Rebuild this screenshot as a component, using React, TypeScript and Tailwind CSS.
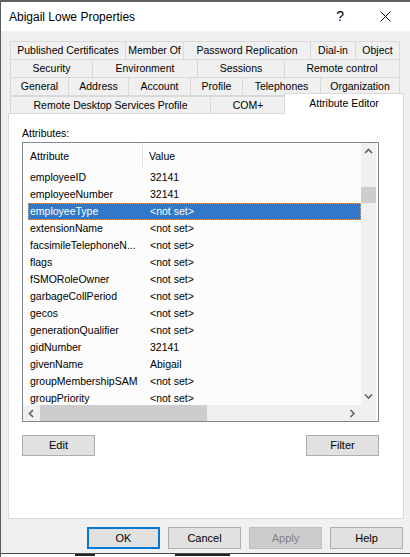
import React from 'react';

const font = { fontFamily: '"Liberation Sans", Arial, sans-serif' };

type Tab = { label: string; w: string };

const rows: Tab[][] = [
  [
    { label: 'Published Certificates', w: 'w-[116px]' },
    { label: 'Member Of', w: 'w-[59px]' },
    { label: 'Password Replication', w: 'w-[128px]' },
    { label: 'Dial-in', w: 'w-[46px]' },
    { label: 'Object', w: 'w-[45px]' },
  ],
  [
    { label: 'Security', w: 'w-[83px]' },
    { label: 'Environment', w: 'w-[106px]' },
    { label: 'Sessions', w: 'w-[88px]' },
    { label: 'Remote control', w: 'w-[116px]' },
  ],
  [
    { label: 'General', w: 'w-[59px]' },
    { label: 'Address', w: 'w-[61px]' },
    { label: 'Account', w: 'w-[63px]' },
    { label: 'Profile', w: 'w-[53px]' },
    { label: 'Telephones', w: 'w-[79px]' },
    { label: 'Organization', w: 'w-[80px]' },
  ],
];

const attributes: [string, string][] = [
  ['employeeID', '32141'],
  ['employeeNumber', '32141'],
  ['employeeType', '<not set>'],
  ['extensionName', '<not set>'],
  ['facsimileTelephoneN...', '<not set>'],
  ['flags', '<not set>'],
  ['fSMORoleOwner', '<not set>'],
  ['garbageCollPeriod', '<not set>'],
  ['gecos', '<not set>'],
  ['generationQualifier', '<not set>'],
  ['gidNumber', '32141'],
  ['givenName', 'Abigail'],
  ['groupMembershipSAM', '<not set>'],
  ['groupPriority', '<not set>'],
];

const Chevron: React.FC<{ dir: 'up' | 'down' | 'left' | 'right' }> = ({ dir }) => {
  const d = {
    up: 'M1 5 L4.5 1.5 L8 5',
    down: 'M1 1.5 L4.5 5 L8 1.5',
    left: 'M5 1 L1.5 4.5 L5 8',
    right: 'M1.5 1 L5 4.5 L1.5 8',
  }[dir];
  const vertical = dir === 'up' || dir === 'down';
  return (
    <svg width={vertical ? 9 : 7} height={vertical ? 7 : 9} viewBox={vertical ? '0 0 9 7' : '0 0 7 9'}>
      <path d={d} fill="none" stroke="#606060" strokeWidth="1.6" />
    </svg>
  );
};

const Button: React.FC<{ label: string; kind?: 'default' | 'disabled'; h?: string }> = ({
  label,
  kind,
  h = 'h-[22px]',
}) => {
  let cls = 'bg-[#e1e1e1] border border-[#adadad] text-black';
  if (kind === 'default') cls = 'bg-[#e1e1e1] border-2 border-[#0078d7] text-black';
  if (kind === 'disabled') cls = 'bg-[#cccccc] border border-[#bfbfbf] text-[#838383]';
  return (
    <div className={`w-[73px] ${h} flex items-center justify-center text-[11px] ${cls}`}>{label}</div>
  );
};

export default function App() {
  return (
    <div className="w-[410px] h-[557px] overflow-hidden bg-white flex flex-col" style={font}>
      <div className="h-[2px] bg-[#5f5f68] shrink-0" />
      <div className="flex-1 flex flex-col border-l border-[#5b5b5b]">
        {/* title bar */}
        <div className="h-[29px] bg-white flex items-center shrink-0">
          <span className="ml-[8px] text-[12px] text-black">Abigail Lowe Properties</span>
          <span className="ml-auto mr-[36px] text-[14px] text-black">?</span>
          <svg className="mr-[19px]" width="11" height="11" viewBox="0 0 11 11">
            <path d="M0.5 0.5 L10.5 10.5 M10.5 0.5 L0.5 10.5" stroke="#000" strokeWidth="1" />
          </svg>
        </div>

        {/* dialog body */}
        <div className="flex-1 bg-[#f0f0f0] flex flex-col text-[10.5px] text-black">
          <div className="pt-[10px] pl-[9px] flex flex-col">
            {rows.map((row, ri) => (
              <div key={ri} className={`flex ${ri > 0 ? '-mt-px' : ''}`}>
                {row.map((t, ti) => (
                  <div
                    key={t.label}
                    className={`${t.w} h-[19px] ${ti > 0 ? '-ml-px' : ''} border border-[#d9d9d9] bg-[#f0f0f0] flex items-center justify-center whitespace-nowrap`}
                  >
                    {t.label}
                  </div>
                ))}
              </div>
            ))}
            <div className="flex items-end -mt-[3px] relative z-10 -mb-px">
              <div className="w-[201px] h-[18px] border border-[#d9d9d9] border-b-0 flex items-center justify-center">
                Remote Desktop Services Profile
              </div>
              <div className="w-[76px] h-[18px] -ml-px border border-[#d9d9d9] border-b-0 flex items-center justify-center">
                COM+
              </div>
              <div className="w-[120px] h-[21px] -ml-[2px] border border-[#d9d9d9] border-b-0 bg-white flex items-start justify-center pt-[2px]">
                Attribute Editor
              </div>
            </div>
          </div>

          {/* panel */}
          <div className="ml-[7px] w-[396px] h-[406px] bg-white border border-[#d9d9d9] pl-[13px] pt-[12px] flex flex-col">
            <div className="h-[14px] leading-[14px]">Attributes:</div>
            <div className="mt-[2px] w-[357px] h-[280px] border border-[#828790] bg-[#fbfcfb] flex flex-col">
              <div className="flex h-[262px]">
                <div className="w-[338px] flex flex-col overflow-hidden">
                  <div className="h-[26px] flex shrink-0">
                    <div className="w-[120px] pl-[7px] pt-[2px] flex items-center border-r border-[#e5e5e5]">Attribute</div>
                    <div className="pl-[6px] pt-[2px] flex items-center">Value</div>
                  </div>
                  {attributes.map(([name, value]) => {
                    const sel = name === 'employeeType';
                    return (
                      <div
                        key={name}
                        className={`ml-[5px] w-[333px] h-[17px] shrink-0 flex items-center ${
                          sel
                            ? 'bg-[#3178c8] text-white border border-dotted border-[#e9a46c]'
                            : 'border border-transparent'
                        }`}
                      >
                        <span className="w-[121px] pl-[1px] whitespace-nowrap">{name}</span>
                        <span className="whitespace-nowrap">{value}</span>
                      </div>
                    );
                  })}
                </div>
                {/* vertical scrollbar */}
                <div className="w-[15px] bg-[#f0f0f0] flex flex-col">
                  <div className="h-[17px] flex items-center justify-center">
                    <Chevron dir="up" />
                  </div>
                  <div className="flex-1 flex flex-col">
                    <div className="h-[27px]" />
                    <div className="h-[16px] bg-[#cdcdcd]" />
                  </div>
                  <div className="h-[17px] flex items-center justify-center">
                    <Chevron dir="down" />
                  </div>
                </div>
              </div>
              {/* horizontal scrollbar */}
              <div className="flex h-[16px]">
                <div className="w-[338px] bg-[#f0f0f0] flex items-center">
                  <div className="w-[17px] flex items-center justify-center">
                    <Chevron dir="left" />
                  </div>
                  <div className="w-[167px] h-full bg-[#cdcdcd]" />
                  <div className="ml-auto w-[17px] flex items-center justify-center">
                    <Chevron dir="right" />
                  </div>
                </div>
                <div className="w-[15px] bg-[#f0f0f0]" />
              </div>
            </div>

            <div className="mt-[13px] w-[357px] flex justify-between">
              <Button label="Edit" h="h-[21px]" />
              <Button label="Filter" h="h-[21px]" />
            </div>
          </div>

          {/* bottom buttons */}
          <div className="mt-[8px] pl-[86px] flex gap-[8px]">
            <Button label="OK" kind="default" />
            <Button label="Cancel" />
            <Button label="Apply" kind="disabled" />
            <Button label="Help" />
          </div>
          <div className="flex-1" />
        </div>
        <div className="h-px bg-[#4a4a4a] shrink-0" />
        {/* glimpse of the window behind */}
        <div className="h-[3px] bg-white shrink-0 flex items-start">
          <div className="ml-[74px] w-[20px] h-[2px] bg-[#222]" />
          <div className="ml-[80px] w-[55px] h-[2px] bg-[#222]" />
        </div>
      </div>
    </div>
  );
}
